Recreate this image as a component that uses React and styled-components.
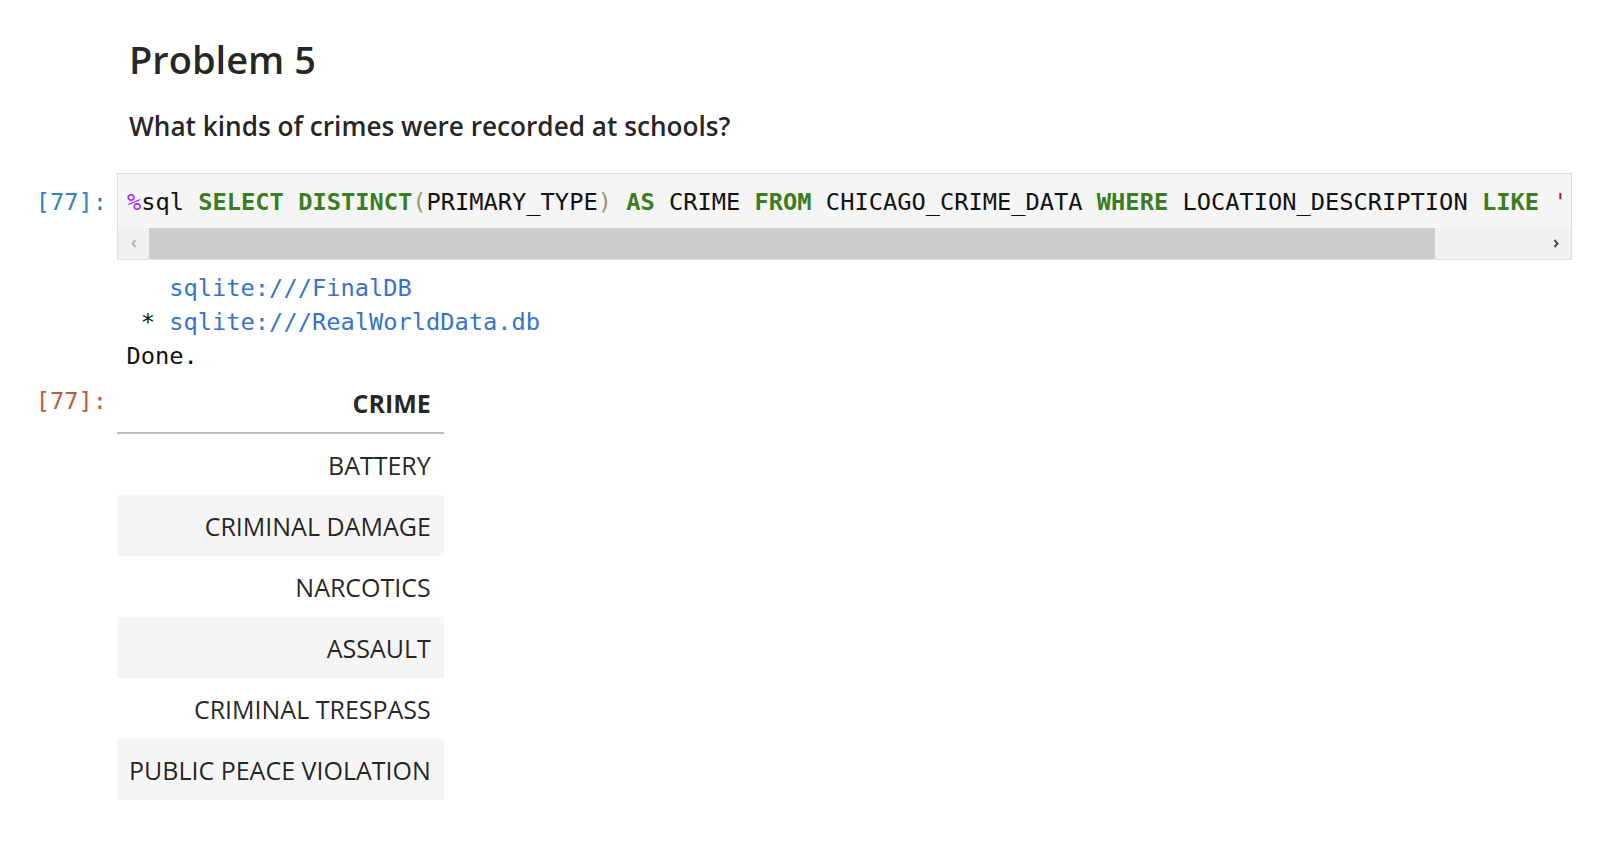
import React from "react";
import styled, { createGlobalStyle } from "styled-components";

const GlobalStyle = createGlobalStyle`
  html, body { margin: 0; padding: 0; background: #ffffff; }
  body { font-family: "Open Sans", "Noto Sans", sans-serif; color: rgba(0,0,0,0.87); }
`;

const MONO = `"DejaVu Sans Mono", "Liberation Mono", monospace`;

const Notebook = styled.div`
  padding: 35px 27px 40px 0;
  display: flex;
  flex-direction: column;
`;

const Cell = styled.div`
  display: flex;
  align-items: flex-start;
  margin-top: ${(p) => p.$mt || 0}px;
`;

const Prompt = styled.div`
  flex: 0 0 117px;
  box-sizing: border-box;
  padding-right: 10px;
  padding-top: ${(p) => p.$pt || 0}px;
  text-align: right;
  font-family: ${MONO};
  font-size: 23.7px;
  line-height: 32px;
  color: ${(p) => p.$color || "transparent"};
  white-space: pre;
`;

const Body = styled.div`
  flex: 1 1 auto;
  min-width: 0;
`;

const Markdown = styled.div`
  padding-left: 12px;
`;

const H3 = styled.h3`
  margin: 0;
  font-size: 38px;
  font-weight: 600;
  line-height: 48px;
  color: rgba(0,0,0,0.87);
`;

const H5 = styled.h5`
  margin: 25px 0 0;
  font-size: 26.2px;
  font-weight: 600;
  line-height: 36px;
  color: rgba(0,0,0,0.87);
`;

const Editor = styled.div`
  border: 1px solid #e0e0e0;
  background: #f5f5f5;
  overflow: hidden;
`;

const CodeLine = styled.div`
  padding: 12px 0 10px 9px;
  font-family: ${MONO};
  font-size: 23.7px;
  line-height: 32px;
  white-space: pre;
  color: #111;
  overflow: hidden;
`;

const Kw = styled.span`
  color: #3a7d22;
  font-weight: 700;
`;
const Op = styled.span`
  color: #aa22ff;
`;
const Br = styled.span`
  color: #999977;
`;
const Str = styled.span`
  color: #ba2121;
`;

const ScrollBar = styled.div`
  display: flex;
  height: 31px;
  background: #f0f0f0;
`;

const ScrollButton = styled.div`
  flex: 0 0 31px;
  display: flex;
  align-items: center;
  justify-content: center;
`;

const ScrollTrack = styled.div`
  flex: 1 1 auto;
  display: flex;
`;

const Thumb = styled.div`
  background: #cdcdcd;
  height: 100%;
`;

const Stdout = styled.pre`
  margin: 10.5px 0 0;
  padding-left: 9.5px;
  font-family: ${MONO};
  font-size: 23.7px;
  line-height: 34px;
  color: #111;
`;

const Link = styled.span`
  color: #3674cc;
`;

const Table = styled.table`
  border-collapse: collapse;
  border-spacing: 0;
  width: 325px;
  font-size: 25px;
  color: rgba(0,0,0,0.87);
`;

const Th = styled.th`
  text-align: right;
  font-weight: 700;
  padding: 2px 13px 0 12px;
  line-height: 57px;
  border-bottom: 2px solid #bdbdbd;
`;

const Tr = styled.tr`
  background: ${(p) => (p.$striped ? "#f5f5f5" : "#ffffff")};
`;

const Td = styled.td`
  text-align: right;
  padding: 3px 13px 0.5px 12px;
  line-height: 57.5px;
  white-space: nowrap;
`;

const Chevron = ({ dir, color }) => (
  <svg width="8" height="9" viewBox="0 0 8 9">
    <path
      d={dir === "left" ? "M5.5 1 L2.5 4.5 L5.5 8" : "M2.5 1 L5.5 4.5 L2.5 8"}
      fill="none"
      stroke={color}
      strokeWidth="2"
    />
  </svg>
);

const rows = [
  "BATTERY",
  "CRIMINAL DAMAGE",
  "NARCOTICS",
  "ASSAULT",
  "CRIMINAL TRESPASS",
  "PUBLIC PEACE VIOLATION",
];

export default function App() {
  return (
    <>
      <GlobalStyle />
      <Notebook>
        <Cell>
          <Prompt />
          <Body>
            <Markdown>
              <H3>Problem 5</H3>
              <H5>What kinds of crimes were recorded at schools?</H5>
            </Markdown>
          </Body>
        </Cell>

        <Cell $mt={29}>
          <Prompt $color="#307fc1" $pt={13}>[77]:</Prompt>
          <Body>
            <Editor>
              <CodeLine>
                <Op>%</Op>sql <Kw>SELECT</Kw> <Kw>DISTINCT</Kw>
                <Br>(</Br>PRIMARY_TYPE<Br>)</Br> <Kw>AS</Kw> CRIME{" "}
                <Kw>FROM</Kw> CHICAGO_CRIME_DATA <Kw>WHERE</Kw>{" "}
                LOCATION_DESCRIPTION <Kw>LIKE</Kw> <Str>'</Str>
              </CodeLine>
              <ScrollBar>
                <ScrollButton>
                  <Chevron dir="left" color="#b8b8b8" />
                </ScrollButton>
                <ScrollTrack>
                  <Thumb style={{ width: "1286px" }} />
                </ScrollTrack>
                <ScrollButton>
                  <Chevron dir="right" color="#505050" />
                </ScrollButton>
              </ScrollBar>
            </Editor>
          </Body>
        </Cell>

        <Cell>
          <Prompt />
          <Body>
            <Stdout>
              {"   "}
              <Link>sqlite:///FinalDB</Link>
              {"\n * "}
              <Link>sqlite:///RealWorldData.db</Link>
              {"\nDone."}
            </Stdout>
          </Body>
        </Cell>

        <Cell>
          <Prompt $color="#bf5b3d" $pt={12}>[77]:</Prompt>
          <Body>
            <Table>
              <thead>
                <tr>
                  <Th>CRIME</Th>
                </tr>
              </thead>
              <tbody>
                {rows.map((r, i) => (
                  <Tr key={r} $striped={i % 2 === 1}>
                    <Td>{r}</Td>
                  </Tr>
                ))}
              </tbody>
            </Table>
          </Body>
        </Cell>
      </Notebook>
    </>
  );
}
